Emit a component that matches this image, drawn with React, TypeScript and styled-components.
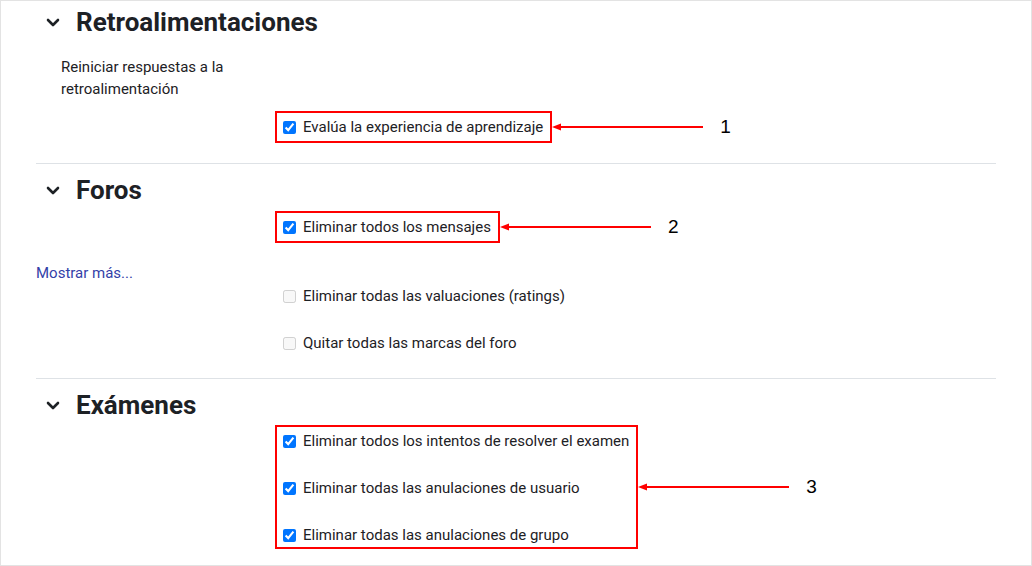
import React from "react";
import styled, { createGlobalStyle } from "styled-components";

const GlobalStyle = createGlobalStyle`
  html, body { margin: 0; padding: 0; background: #fff; }
  body { font-family: Roboto, "Liberation Sans", sans-serif; color: #1d2125; }
`;

const Frame = styled.div`
  width: 1032px;
  height: 566px;
  box-sizing: border-box;
  border: 1px solid #e3e3e3;
  padding: 0 35px;
  overflow: hidden;
  background: #fff;
`;

const Section = styled.section<{ $pt: number; $pb: number; $last?: boolean }>`
  padding-top: ${(p) => p.$pt}px;
  padding-bottom: ${(p) => p.$pb}px;
  border-bottom: ${(p) => (p.$last ? "none" : "1px solid #dee2e6")};
`;

const Heading = styled.h3`
  display: flex;
  align-items: center;
  height: 42px;
  margin: 0;
  font-size: 26px;
  font-weight: 700;
  color: #1d2125;
`;

const ChevronBox = styled.span`
  display: inline-flex;
  margin-left: 10px;
  margin-right: 16px;
  width: 14px;
  justify-content: center;
`;

const FormRow = styled.div<{ $mt?: number; $h?: number }>`
  display: grid;
  grid-template-columns: 239px 1fr;
  align-items: center;
  margin-top: ${(p) => p.$mt ?? 0}px;
  min-height: ${(p) => p.$h ?? 22}px;
`;

const Label = styled.div`
  padding-left: 25px;
  padding-right: 40px;
  font-size: 15px;
  line-height: 22px;
`;

const MoreLink = styled.a`
  grid-column: 1 / span 2;
  font-size: 15px;
  line-height: 22px;
  color: #3341a8;
  text-decoration: none;
`;

const Annotated = styled.div`
  grid-column: 2;
  display: flex;
  align-items: center;
`;

const Box = styled.div<{ $boxed?: boolean; $pad?: string }>`
  display: flex;
  flex-direction: column;
  gap: 25px;
  box-sizing: border-box;
  border: ${(p) => (p.$boxed ? "2px solid #ff0000" : "none")};
  padding: ${(p) => p.$pad ?? (p.$boxed ? "3px 6px 1px 6px" : "0 8px")};
`;

const CheckItem = styled.label<{ $h?: number }>`
  display: flex;
  align-items: center;
  gap: 7px;
  height: ${(p) => p.$h ?? 22}px;
  font-size: 15px;
  color: #1d2125;
  white-space: nowrap;
  padding-right: 1px;
`;

const Check = styled.input`
  margin: 0;
  width: 13px;
  height: 13px;
  accent-color: #0075ff;
`;

const Number = styled.span`
  margin-left: 17px;
  font-family: "Liberation Sans", Arial, sans-serif;
  font-size: 19px;
  color: #000;
`;

const Chevron = () => (
  <svg width="14" height="9" viewBox="0 0 14 9">
    <polyline points="2,2 7,7 12,2" fill="none" stroke="#1d2125" strokeWidth="2.6" strokeLinecap="round" strokeLinejoin="round" />
  </svg>
);

const Arrow = () => (
  <svg width="151" height="10" viewBox="0 0 151 10" style={{ display: "block" }}>
    <line x1="8" y1="5" x2="151" y2="5" stroke="#ff0000" strokeWidth="2" />
    <polygon points="0,5 9,1.5 9,8.5" fill="#ff0000" />
  </svg>
);

const Item = ({ text, checked = true, disabled = false, h }: { text: string; checked?: boolean; disabled?: boolean; h?: number }) => (
  <CheckItem $h={h}>
    <Check type="checkbox" checked={checked} disabled={disabled} readOnly />
    {text}
  </CheckItem>
);

export default function App() {
  return (
    <>
      <GlobalStyle />
      <Frame>
        <Section $pt={0} $pb={20}>
          <Heading>
            <ChevronBox><Chevron /></ChevronBox>
            Retroalimentaciones
          </Heading>
          <FormRow $mt={13}>
            <Label>Reiniciar respuestas a la retroalimentación</Label>
          </FormRow>
          <FormRow $mt={11}>
            <Annotated>
              <Box $boxed $pad="0 6px">
                <Item text="Evalúa la experiencia de aprendizaje" h={28} />
              </Box>
              <Arrow />
              <Number>1</Number>
            </Annotated>
          </FormRow>
        </Section>

        <Section $pt={5} $pb={24}>
          <Heading>
            <ChevronBox><Chevron /></ChevronBox>
            Foros
          </Heading>
          <FormRow>
            <Annotated>
              <Box $boxed $pad="0 6px">
                <Item text="Eliminar todos los mensajes" h={28} />
              </Box>
              <Arrow />
              <Number>2</Number>
            </Annotated>
          </FormRow>
          <FormRow $mt={19}>
            <MoreLink href="#">Mostrar más...</MoreLink>
          </FormRow>
          <FormRow $mt={1}>
            <Annotated>
              <Box>
                <Item text="Eliminar todas las valuaciones (ratings)" checked={false} disabled />
              </Box>
            </Annotated>
          </FormRow>
          <FormRow $mt={25}>
            <Annotated>
              <Box>
                <Item text="Quitar todas las marcas del foro" checked={false} disabled />
              </Box>
            </Annotated>
          </FormRow>
        </Section>

        <Section $pt={5} $pb={0} $last>
          <Heading>
            <ChevronBox><Chevron /></ChevronBox>
            Exámenes
          </Heading>
          <FormRow $mt={-1}>
            <Annotated>
              <Box $boxed>
                <Item text="Eliminar todos los intentos de resolver el examen" />
                <Item text="Eliminar todas las anulaciones de usuario" />
                <Item text="Eliminar todas las anulaciones de grupo" />
              </Box>
              <Arrow />
              <Number>3</Number>
            </Annotated>
          </FormRow>
        </Section>
      </Frame>
    </>
  );
}
